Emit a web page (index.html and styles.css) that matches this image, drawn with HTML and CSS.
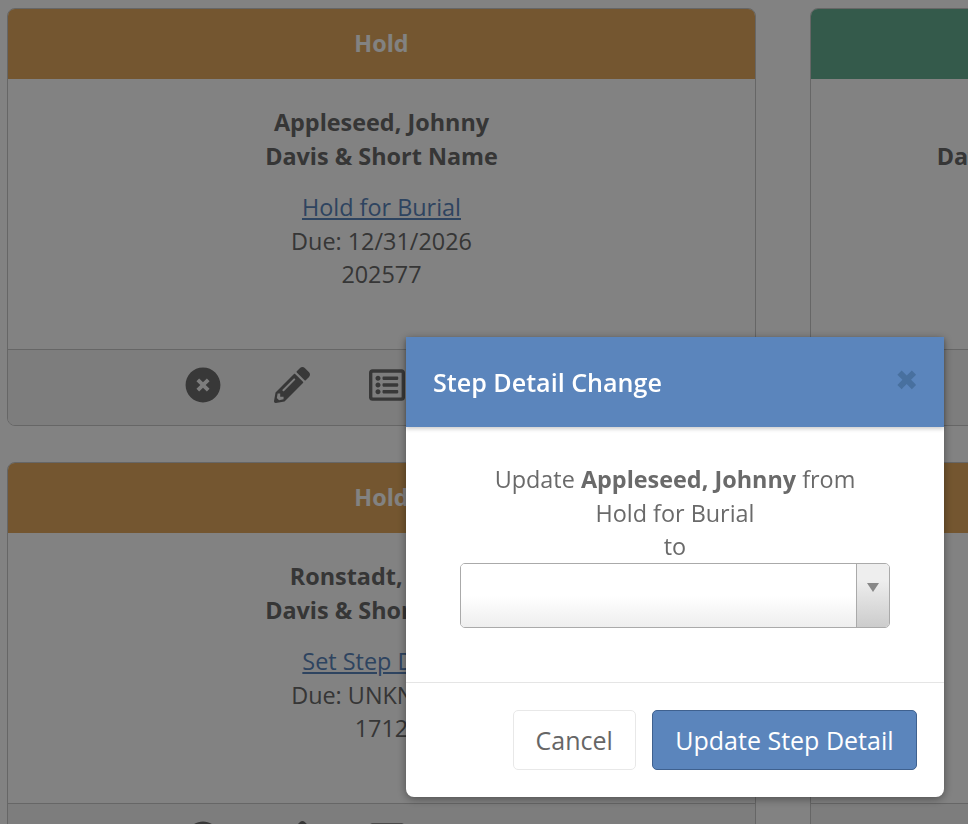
FILE: index.html
```html
<!DOCTYPE html>
<html lang="en">
<head>
    <meta charset="UTF-8">
    <meta name="viewport" content="width=device-width, initial-scale=1.0">
    <title>Step Detail Change</title>
    <link rel="stylesheet" href="styles.css">
</head>
<body>
    <svg class="icon-defs" aria-hidden="true">
        <symbol id="icon-times" viewBox="0 0 512 512"><path fill-rule="evenodd" d="M256 8C119 8 8 119 8 256s111 248 248 248 248-111 248-248S393 8 256 8zM256 218L311 163L349 201L294 256L349 311L311 349L256 294L201 349L163 311L218 256L163 201L201 163z"/></symbol>
        <symbol id="icon-pencil" viewBox="0 0 512 512"><path d="M497.9 142.1l-46.1 46.1c-4.7 4.7-12.3 4.7-17 0l-111-111c-4.7-4.7-4.7-12.3 0-17l46.1-46.1c18.7-18.7 49.1-18.7 67.9 0l60.1 60.1c18.8 18.7 18.8 49.1 0 67.9zM284.2 99.8L21.6 362.4.4 483.9c-2.9 16.4 11.4 30.6 27.8 27.8l121.5-21.3 262.6-262.6c4.7-4.7 4.7-12.3 0-17l-111-111c-4.8-4.7-12.4-4.7-17.1 0zM124.1 339.9c-5.5-5.5-5.5-14.3 0-19.8l154-154c5.5-5.5 14.3-5.5 19.8 0s5.5 14.3 0 19.8l-154 154c-5.5 5.5-14.3 5.5-19.8 0zM88 424h48v36.3l-64.5 11.3-31.1-31.1L51.7 376H88v48z"/></symbol>
        <symbol id="icon-list" viewBox="0 0 512 512"><path d="M464 32H48C21.49 32 0 53.49 0 80v352c0 26.51 21.49 48 48 48h416c26.51 0 48-21.49 48-48V80c0-26.51-21.49-48-48-48zm-6 400H54a6 6 0 0 1-6-6V86a6 6 0 0 1 6-6h404a6 6 0 0 1 6 6v340a6 6 0 0 1-6 6zm-42-92v24c0 6.627-5.373 12-12 12H204c-6.627 0-12-5.373-12-12v-24c0-6.627 5.373-12 12-12h200c6.627 0 12 5.373 12 12zm0-96v24c0 6.627-5.373 12-12 12H204c-6.627 0-12-5.373-12-12v-24c0-6.627 5.373-12 12-12h200c6.627 0 12 5.373 12 12zm0-96v24c0 6.627-5.373 12-12 12H204c-6.627 0-12-5.373-12-12v-24c0-6.627 5.373-12 12-12h200c6.627 0 12 5.373 12 12zm-252 12c0 19.882-16.118 36-36 36s-36-16.118-36-36 16.118-36 36-36 36 16.118 36 36zm0 96c0 19.882-16.118 36-36 36s-36-16.118-36-36 16.118-36 36-36 36 16.118 36 36zm0 96c0 19.882-16.118 36-36 36s-36-16.118-36-36 16.118-36 36-36 36 16.118 36 36z"/></symbol>
    </svg>

    <div class="board">
        <!-- Row one -->
        <div class="card">
            <div class="card-head hold">Hold</div>
            <div class="card-body">
                <div class="names"><b>Appleseed, Johnny</b><br><b>Davis &amp; Short Name</b></div>
                <a href="#">Hold for Burial</a><br>
                Due: 12/31/2026<br>
                202577
            </div>
            <div class="card-foot">
                <svg class="icon"><use href="#icon-times"/></svg>
                <svg class="icon"><use href="#icon-pencil"/></svg>
                <svg class="icon icon-list"><use href="#icon-list"/></svg>
            </div>
        </div>

        <div class="card">
            <div class="card-head ready"></div>
            <div class="card-body">
                <div class="names"><br><b>Davis &amp; Short Name</b></div>
            </div>
            <div class="card-foot"></div>
        </div>

        <!-- Row two -->
        <div class="card">
            <div class="card-head hold">Hold</div>
            <div class="card-body">
                <div class="names"><b>Ronstadt, Linda</b><br><b>Davis &amp; Short Name</b></div>
                <a href="#">Set Step Detail</a><br>
                Due: UNKNOWN<br>
                1712
            </div>
            <div class="card-foot">
                <svg class="icon"><use href="#icon-times"/></svg>
                <svg class="icon"><use href="#icon-pencil"/></svg>
                <svg class="icon icon-list"><use href="#icon-list"/></svg>
            </div>
        </div>

        <div class="card">
            <div class="card-head hold"></div>
            <div class="card-body"></div>
            <div class="card-foot"></div>
        </div>
    </div>

    <div class="backdrop"></div>

    <!-- Step detail modal -->
    <div class="modal">
        <div class="modal-head">
            <span class="modal-title">Step Detail Change</span>
            <span class="modal-close">&#x2716;</span>
        </div>
        <div class="modal-body">
            <p>Update <b>Appleseed, Johnny</b> from<br>Hold for Burial<br>to</p>
            <div class="select-box">
                <div class="select-value"></div>
                <div class="select-arrow"></div>
            </div>
        </div>
        <div class="modal-foot">
            <button class="btn btn-cancel">Cancel</button>
            <button class="btn btn-primary">Update Step Detail</button>
        </div>
    </div>
</body>
</html>
```

FILE: styles.css
```css
html, body {
    height: 100%;
}
body {
    margin: 0;
    overflow: hidden;
    background: #fff;
    color: #6a6a6a;
    font-family: "Open Sans", sans-serif;
    font-size: 23.4px;
    line-height: 33.6px;
}
b {
    font-weight: 700;
}
.icon-defs {
    display: none;
}

.board {
    display: grid;
    grid-template-columns: 749px 486px;
    grid-auto-rows: 418px;
    gap: 36px 54px;
    padding: 8px 0 0 7px;
}
.card {
    display: flex;
    flex-direction: column;
    border: 1px solid #c8c8c8;
    border-radius: 8px;
    overflow: hidden;
    text-align: center;
}
.card-head {
    height: 70px;
    flex: none;
    font-weight: 700;
    line-height: 68px;
    color: #fff;
}
.hold {
    background: #e4aa5e;
}
.ready {
    background: #66b094;
}
.card-body {
    flex: 1;
    padding: 27px 20px 0;
}
.names {
    margin-bottom: 18px;
}
.card-body a {
    color: #5b85bc;
}
.card-foot {
    height: 76px;
    flex: none;
    box-sizing: border-box;
    display: flex;
    gap: 53px;
    padding: 17px 0 0 177px;
    border-top: 1px solid #c8c8c8;
    background: #f5f5f5;
}
.icon {
    width: 36px;
    height: 36px;
    fill: #6f6f6f;
}
.icon-list {
    margin-left: 6px;
}

.backdrop {
    position: fixed;
    inset: 0;
    background: rgba(0, 0, 0, 0.49);
}

.modal {
    position: fixed;
    left: 406px;
    top: 337px;
    width: 538px;
    height: 460px;
    display: flex;
    flex-direction: column;
    background: #fff;
    border-radius: 0 0 8px 8px;
    box-shadow: 0 2px 10px rgba(0, 0, 0, 0.4);
}
.modal-head {
    height: 90px;
    flex: none;
    box-sizing: border-box;
    display: flex;
    justify-content: space-between;
    align-items: center;
    padding: 0 27px;
    background: #5b85bc;
    box-shadow: 0 2px 4px rgba(0, 0, 0, 0.2);
    color: #fff;
}
.modal-title {
    margin-top: 1px;
    font-size: 25.1px;
    font-weight: 600;
}
.modal-close {
    margin: -4px -1px 0 0;
    font-size: 28px;
    color: #48709f;
}
.modal-body {
    flex: 1;
    padding: 36px 54px 0;
    text-align: center;
}
.modal-body p {
    margin: 0 0 -1px;
}
.select-box {
    display: flex;
    height: 65px;
    box-sizing: border-box;
    border: 1px solid #aaa;
    border-radius: 5px;
    overflow: hidden;
}
.select-value {
    flex: 1;
    background: linear-gradient(#fff 50%, #eee);
}
.select-arrow {
    width: 33px;
    display: flex;
    justify-content: center;
    padding-top: 19px;
    box-sizing: border-box;
    border-left: 1px solid #aaa;
    background: linear-gradient(#eee 25%, #ccc);
}
.select-arrow::after {
    content: "";
    width: 0;
    height: 0;
    border-left: 6px solid transparent;
    border-right: 6px solid transparent;
    border-top: 9px solid #888;
}
.modal-foot {
    height: 115px;
    flex: none;
    box-sizing: border-box;
    display: flex;
    justify-content: flex-end;
    align-items: flex-start;
    gap: 16px;
    padding: 27px 27px 0;
    border-top: 1px solid #e5e5e5;
}
.btn {
    height: 60px;
    padding: 0 22px;
    border-radius: 5px;
    font-family: inherit;
    font-size: 25px;
}
.btn-cancel {
    border: 1px solid #e8e8e8;
    background: #fff;
    color: #666;
}
.btn-primary {
    padding: 0 22.5px;
    border: 1px solid #3f618f;
    background: #5b85bc;
    color: #fff;
}
```
